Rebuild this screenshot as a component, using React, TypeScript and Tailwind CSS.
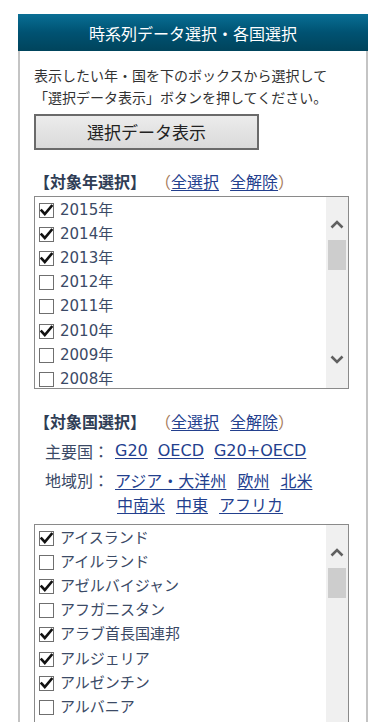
const font = { fontFamily: '"Noto Sans CJK JP", "Noto Sans", sans-serif' };
const latin = { fontFamily: '"DejaVu Sans", "Noto Sans CJK JP", sans-serif' };

const years = [
  { label: "2015年", checked: true },
  { label: "2014年", checked: true },
  { label: "2013年", checked: true },
  { label: "2012年", checked: false },
  { label: "2011年", checked: false },
  { label: "2010年", checked: true },
  { label: "2009年", checked: false },
  { label: "2008年", checked: false },
];

const countries = [
  { label: "アイスランド", checked: true },
  { label: "アイルランド", checked: false },
  { label: "アゼルバイジャン", checked: true },
  { label: "アフガニスタン", checked: false },
  { label: "アラブ首長国連邦", checked: true },
  { label: "アルジェリア", checked: true },
  { label: "アルゼンチン", checked: true },
  { label: "アルバニア", checked: false },
];

function Check({ checked }: { checked: boolean }) {
  return (
    <span className="relative flex h-[15px] w-[15px] shrink-0 items-center justify-center border border-[#6f6f6f] bg-white">
      {checked && (
        <svg width="13" height="13" viewBox="0 0 13 13" className="absolute left-[0px] top-[0px]">
          <path d="M1.5 6.5 L4.8 10 L11.5 2" fill="none" stroke="#111" strokeWidth="2.6" strokeLinecap="square" />
        </svg>
      )}
    </span>
  );
}

function ListBox({ items, height }: { items: { label: string; checked: boolean }[]; height: string }) {
  return (
    <div className={`flex w-[315px] overflow-hidden border border-[#8a8a8a] bg-white ${height}`}>
      <div className="flex-1 pt-[1px]">
        {items.map((it) => (
          <div key={it.label} className="flex h-[24.2px] items-center gap-[6px] pl-[4px]">
            <Check checked={it.checked} />
            <span className="text-[15px] leading-none text-[#3b4a66]" style={latin}>
              {it.label}
            </span>
          </div>
        ))}
      </div>
      {/* scrollbar */}
      <div className="relative w-[22px] bg-[#f0f0f0]">
        <svg width="14" height="9" viewBox="0 0 14 9" className="absolute left-[4px] top-[23px]">
          <path d="M1.5 7.5 L7 2 L12.5 7.5" fill="none" stroke="#606060" strokeWidth="2.6" />
        </svg>
        <div className="absolute left-[2px] top-[43px] h-[30px] w-[18px] bg-[#cdcdcd]" />
        <svg width="14" height="9" viewBox="0 0 14 9" className="absolute bottom-[24px] left-[4px]">
          <path d="M1.5 1.5 L7 7 L12.5 1.5" fill="none" stroke="#606060" strokeWidth="2.6" />
        </svg>
      </div>
    </div>
  );
}

function Heading({ title }: { title: string }) {
  return (
    <div className="flex h-[24px] items-center text-[16px] leading-none">
      <span className="font-bold text-[#2f3d55]">{title}</span>
      <span className="ml-[9px] text-[#a67c5b]">（</span>
      <a className="text-[#23408e] underline underline-offset-2">全選択</a>
      <a className="ml-[11px] text-[#23408e] underline underline-offset-2">全解除</a>
      <span className="text-[#a67c5b]">）</span>
    </div>
  );
}

const link = "text-[#23408e] underline underline-offset-2";

export default function App() {
  return (
    <div className="h-[722px] overflow-hidden bg-white pt-[14px]" style={font}>
      <div className="ml-[18px] w-[350px]">
        <div className="flex h-[37px] items-center justify-center bg-gradient-to-b from-[#0a6f95] via-[#005272] to-[#00445c] text-[16px] text-white">
          時系列データ選択・各国選択
        </div>
        <div className="h-[671px] overflow-hidden border-l-2 border-r-2 border-[#c4c4c4] pl-[14px] pt-[13px]">
          <p className="text-[14px] leading-[22px] text-[#333]">
            表示したい年・国を下のボックスから選択して
            <br />
            「選択データ表示」ボタンを押してください。
          </p>
          <button className="mt-[6px] flex h-[36px] w-[225px] items-center justify-center border-2 border-[#6a6a6a] bg-gradient-to-b from-[#ececec] to-[#dadada] text-[17px] text-[#222]">
            選択データ表示
          </button>

          <div className="mt-[19px]">
            <Heading title="【対象年選択】" />
          </div>
          <div className="mt-[3px]">
            <ListBox items={years} height="h-[193px]" />
          </div>

          <div className="mt-[20px]">
            <Heading title="【対象国選択】" />
          </div>
          <div className="mt-[6px] flex text-[16px] leading-[24px] text-[#3b4a66]">
            <span className="w-[81px] shrink-0 pl-[11px]">主要国：</span>
            <div className="flex gap-[10px]" style={latin}>
              <a className={link}>G20</a>
              <a className={link}>OECD</a>
              <a className={link}>G20+OECD</a>
            </div>
          </div>
          <div className="mt-[5px] flex text-[16px] leading-[24px] text-[#3b4a66]">
            <span className="w-[81px] shrink-0 pl-[11px]">地域別：</span>
            <div className="flex w-[215px] flex-wrap gap-x-[11px]">
              <a className={link}>アジア・大洋州</a>
              <a className={link}>欧州</a>
              <a className={link}>北米</a>
              <a className={`ml-[2px] ${link}`}>中南米</a>
              <a className={link}>中東</a>
              <a className={link}>アフリカ</a>
            </div>
          </div>
          <div className="mt-[8px]">
            <ListBox items={countries} height="h-[240px]" />
          </div>
        </div>
      </div>
    </div>
  );
}
